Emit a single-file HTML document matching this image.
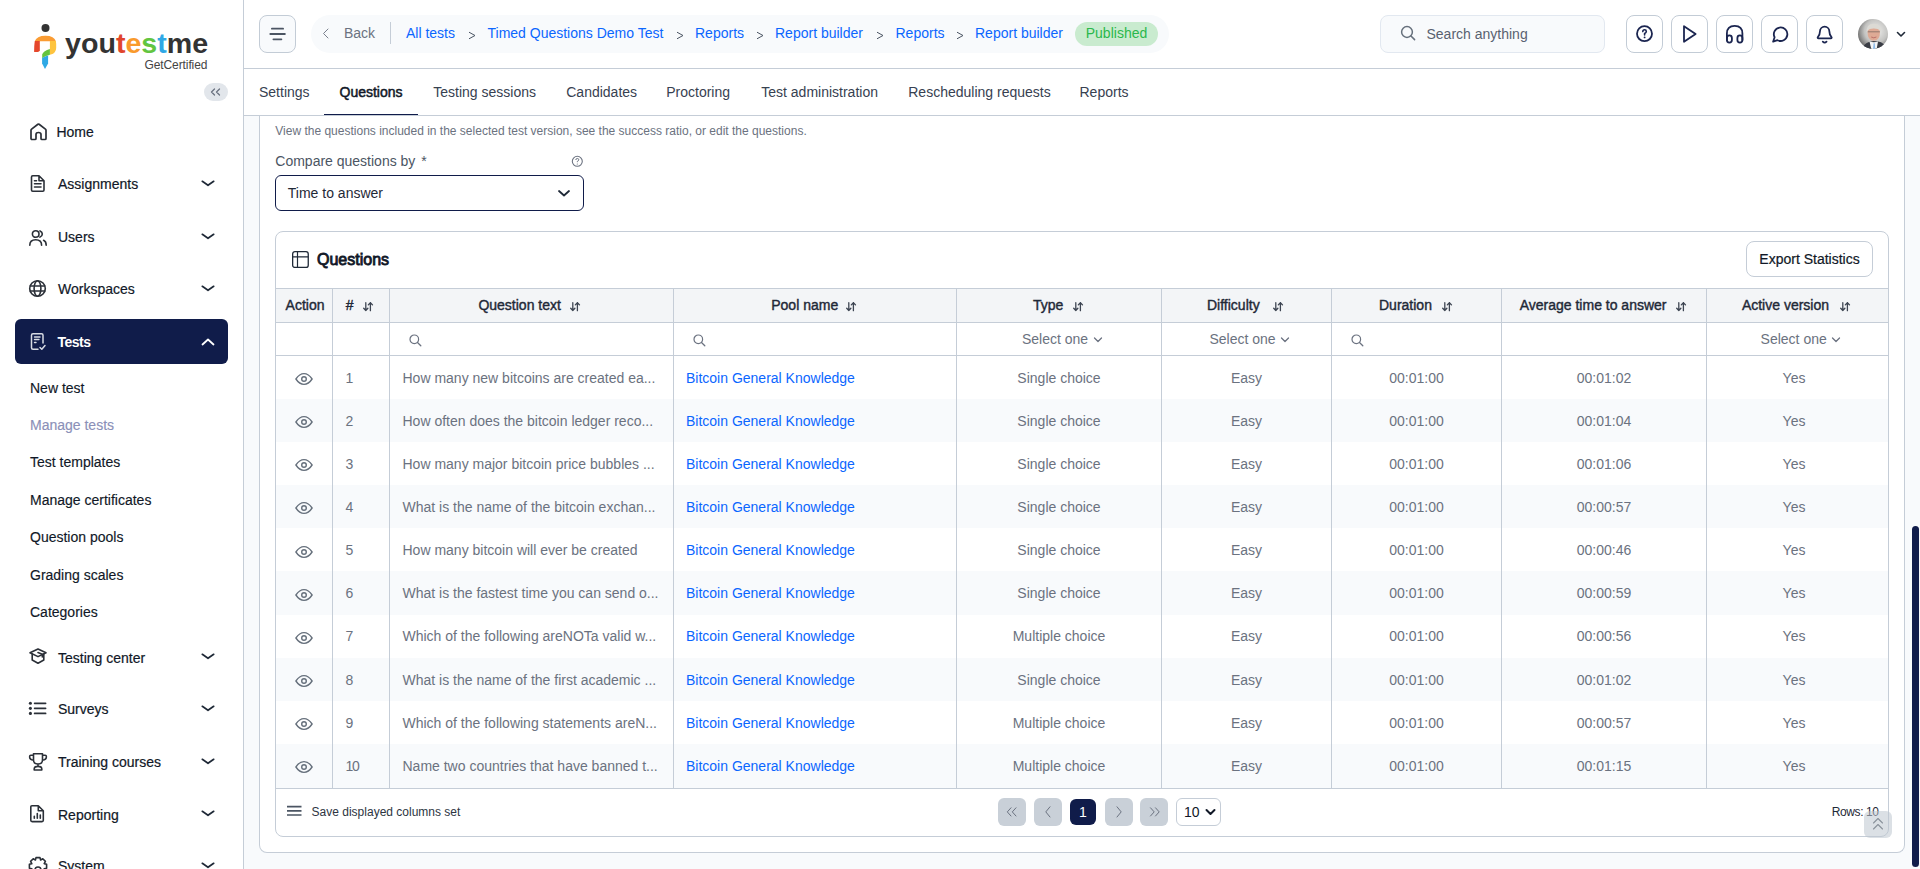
<!DOCTYPE html>
<html><head><meta charset="utf-8">
<style>
*{box-sizing:border-box;margin:0;padding:0}
html,body{width:1920px;height:869px;overflow:hidden;background:#fff;font-family:"Liberation Sans",sans-serif;color:#1f2937}
.a{position:absolute;white-space:nowrap}
.t14{font-size:14px;line-height:16px}
.t12{font-size:12px;line-height:14px}
svg{position:absolute;overflow:visible}
#side{position:absolute;left:0;top:0;width:243px;height:869px;background:#fff}
#sideb{position:absolute;left:243px;top:0;width:1px;height:869px;background:#c5cdd7}
#hdrb{position:absolute;left:244px;top:68px;width:1676px;height:1px;background:#c5cdd7}
#tabb{position:absolute;left:244px;top:115px;width:1676px;height:1px;background:#c5cdd7}
#content{position:absolute;left:244px;top:116px;width:1676px;height:753px;background:#f8fafc}
.sitem{color:#1f2937}
.chev{stroke:#1f2937;stroke-width:1.8;fill:none;stroke-linecap:round;stroke-linejoin:round}
.ico{stroke:#2b3038;stroke-width:1.6;fill:none;stroke-linecap:round;stroke-linejoin:round}
.bc{color:#0b66ff}
.gt{color:#8a9099}
.tab{color:#374151}
.ibtn{position:absolute;top:15px;width:37px;height:38px;border:1px solid #c5cdd7;border-radius:8px;background:#fff}
.hico{stroke:#1b2550;stroke-width:1.8;fill:none;stroke-linecap:round;stroke-linejoin:round}
.th{font-size:14px;line-height:16px;font-weight:700;letter-spacing:-0.5px;color:#1f2937}
.td{font-size:14px;line-height:16px;color:#6b7280}
.lnk{font-size:14px;line-height:16px;color:#0b66ff}
.vl{position:absolute;width:1px;background:#c5cdd7}
.hl{position:absolute;height:1px;background:#c5cdd7}
.pg{position:absolute;top:798px;width:28px;height:28px;border-radius:6px;background:#c8cfd8}
</style></head><body>

<svg style="left:0;top:0" width="243" height="80" viewBox="0 0 243 80">
<circle cx="45.5" cy="28" r="4" fill="#333"/>
<path d="M34.8 41.3 Q36.5 35.7 45.5 35.7 Q54.3 35.7 55.9 41.3 L49.9 41.3 L39.8 41.3 Z" fill="#fa9c33"/>
<path d="M34.8 41 L39.8 41 L39.8 50.3 Q39.6 52 37.6 52 L34.1 52 Q34 46 34.8 41 Z" fill="#e5472b"/>
<path d="M49.9 41 L55.9 41 Q56.4 44 56.2 48 Q56 53.3 50.8 54.5 L49.9 54.7 Z" fill="#fec43f"/>
<path d="M49.9 49 L49.9 54.7 Q45 56 42.2 58.3 L42.2 54.2 Q43.5 51 49.9 49 Z" fill="#64c43e"/>
<path d="M42.1 58 Q45 56.2 48.1 55.6 L48.1 63.5 L45 69 L42.1 63.5 Z" fill="#2fa9e5"/>
</svg>
<div class="a" style="left:65px;top:29px;font-size:27px;line-height:31px;font-weight:700;letter-spacing:0;transform:scaleX(1.06);transform-origin:0 0;color:#333"><span>you</span><span style="color:#e0452c">t</span><span style="color:#f99a2c">e</span><span style="color:#62c540">s</span><span style="color:#2fa8e6">t</span><span>me</span></div>
<div class="a" style="left:144.5px;top:57.53px;font-size:12px;line-height:14px;color:#444;letter-spacing:-0.1px">GetCertified</div>
<div class="a" style="left:204px;top:83px;width:24px;height:18px;border-radius:9px;background:#e2e6eb"></div>
<svg style="left:204px;top:83px" width="24" height="18"><path d="M10.5 6 L7.5 9 L10.5 12 M15.5 6 L12.5 9 L15.5 12" stroke="#6b7280" stroke-width="1.3" fill="none" stroke-linecap="round" stroke-linejoin="round"/></svg>
<svg style="left:30px;top:123px" width="18" height="18"><path d="M1 15.5 L1 7.3 Q1 6.6 1.6 6.1 L7.9 1.3 Q8.5 0.9 9.1 1.3 L15.4 6.1 Q16 6.6 16 7.3 L16 15.5 Q16 16.5 15 16.5 L12 16.5 Q11 16.5 11 15.5 L11 11.5 Q11 9.5 8.5 9.5 Q6 9.5 6 11.5 L6 15.5 Q6 16.5 5 16.5 L2 16.5 Q1 16.5 1 15.5 Z" class="ico" style="stroke-width:1.7"/></svg>
<div class="a" style="left:56.4px;top:124.37px;font-size:14px;line-height:16px;color:#111827;-webkit-text-stroke:0.2px #111827">Home</div>
<svg style="left:30px;top:175px" width="18" height="18"><path d="M1.5 2 Q1.5 0.8 2.7 0.8 L9 0.8 L14 5.8 L14 15 Q14 16.2 12.8 16.2 L2.7 16.2 Q1.5 16.2 1.5 15 Z M9 0.8 L9 5.8 L14 5.8" class="ico"/><path d="M4.5 5.8 L6.5 5.8 M4.5 8.8 L11 8.8 M4.5 12 L11 12" class="ico"/></svg>
<div class="a" style="left:58px;top:176.37px;font-size:14px;line-height:16px;color:#111827;-webkit-text-stroke:0.2px #111827">Assignments</div>
<svg style="left:201px;top:179px" width="14" height="8"><path d="M1.3 2.3 L7 6.3 L12.7 2.3" class="chev" style="stroke-width:1.7"/></svg>
<svg style="left:29px;top:228.5px" width="18" height="18"><circle cx="6.7" cy="5" r="3.3" class="ico"/><path d="M0.8 16.2 Q0.8 10.8 6.7 10.8 Q12.6 10.8 12.6 16.2" class="ico"/><path d="M11 1.9 Q13.3 2.9 13.3 5 Q13.3 7.1 11 8.1 M14.6 11.3 Q17.2 12.5 17.2 16.2" class="ico"/></svg>
<div class="a" style="left:58px;top:229.37px;font-size:14px;line-height:16px;color:#111827;-webkit-text-stroke:0.2px #111827">Users</div>
<svg style="left:201px;top:232px" width="14" height="8"><path d="M1.3 2.3 L7 6.3 L12.7 2.3" class="chev" style="stroke-width:1.7"/></svg>
<svg style="left:29px;top:280px" width="18" height="18"><circle cx="8.5" cy="8.5" r="7.8" class="ico"/><path d="M1.2 6 L15.8 6 M1.2 11 L15.8 11" class="ico"/><ellipse cx="8.5" cy="8.5" rx="3.4" ry="7.8" class="ico"/></svg>
<div class="a" style="left:58px;top:281.37px;font-size:14px;line-height:16px;color:#111827;-webkit-text-stroke:0.2px #111827">Workspaces</div>
<svg style="left:201px;top:284px" width="14" height="8"><path d="M1.3 2.3 L7 6.3 L12.7 2.3" class="chev" style="stroke-width:1.7"/></svg>
<div class="a" style="left:15px;top:319px;width:213px;height:45px;border-radius:6px;background:#101c4a"></div>
<svg style="left:30px;top:333px" width="18" height="18"><path d="M8 16.2 L3 16.2 Q1.5 16.2 1.5 14.7 L1.5 2.3 Q1.5 0.8 3 0.8 L11.5 0.8 Q13 0.8 13 2.3 L13 10" stroke="#d7dbe3" stroke-width="1.5" fill="none" stroke-linecap="round"/><path d="M4.5 4 L10 4 M4.5 6.5 L9 6.5 M4.5 9.5 L6 9.5" stroke="#d7dbe3" stroke-width="1.4" fill="none" stroke-linecap="round"/><path d="M10 14.5 L11.8 16.2 L15 12.5" stroke="#d7dbe3" stroke-width="1.5" fill="none" stroke-linecap="round" stroke-linejoin="round"/></svg>
<div class="a" style="left:57.5px;top:334.37px;font-size:14px;line-height:16px;color:#fff;font-weight:700;letter-spacing:-0.5px">Tests</div>
<svg style="left:201px;top:338px" width="14" height="8"><path d="M1.5 6.5 L7 1.5 L12.5 6.5" stroke="#fff" stroke-width="1.8" fill="none" stroke-linecap="round" stroke-linejoin="round"/></svg>
<div class="a" style="left:30px;top:379.57px;font-size:14px;line-height:16px;color:#111827;-webkit-text-stroke:0.15px #111827">New test</div>
<div class="a" style="left:30px;top:416.57px;font-size:14px;line-height:16px;color:#8b90b8;-webkit-text-stroke:0.15px #8b90b8">Manage tests</div>
<div class="a" style="left:30px;top:454.37px;font-size:14px;line-height:16px;color:#111827;-webkit-text-stroke:0.15px #111827">Test templates</div>
<div class="a" style="left:30px;top:491.77px;font-size:14px;line-height:16px;color:#111827;-webkit-text-stroke:0.15px #111827">Manage certificates</div>
<div class="a" style="left:30px;top:529.37px;font-size:14px;line-height:16px;color:#111827;-webkit-text-stroke:0.15px #111827">Question pools</div>
<div class="a" style="left:30px;top:566.77px;font-size:14px;line-height:16px;color:#111827;-webkit-text-stroke:0.15px #111827">Grading scales</div>
<div class="a" style="left:30px;top:604.37px;font-size:14px;line-height:16px;color:#111827;-webkit-text-stroke:0.15px #111827">Categories</div>
<svg style="left:28px;top:647.4px" width="20" height="20"><path d="M10 2 L18 5.8 L10 9.6 L2 5.8 Z" class="ico"/><path d="M4.2 7 L4.2 13 L10 16.2 L15.8 13 L15.8 7" class="ico"/><path d="M10 5.6 L14.3 7.3 L14.3 10" class="ico"/></svg>
<div class="a" style="left:58px;top:649.77px;font-size:14px;line-height:16px;color:#111827;-webkit-text-stroke:0.2px #111827">Testing center</div>
<svg style="left:201px;top:652.4px" width="14" height="8"><path d="M1.3 2.3 L7 6.3 L12.7 2.3" class="chev" style="stroke-width:1.7"/></svg>
<svg style="left:28px;top:699px" width="20" height="20"><circle cx="2.4" cy="4.3" r="1.55" fill="#2b3038"/><circle cx="2.4" cy="9.35" r="1.55" fill="#2b3038"/><circle cx="2.4" cy="14.4" r="1.55" fill="#2b3038"/><path d="M6.6 4.3 L17.6 4.3 M6.6 9.35 L17.6 9.35 M6.6 14.4 L17.6 14.4" class="ico" style="stroke-width:1.7"/></svg>
<div class="a" style="left:58px;top:701.37px;font-size:14px;line-height:16px;color:#111827;-webkit-text-stroke:0.2px #111827">Surveys</div>
<svg style="left:201px;top:704px" width="14" height="8"><path d="M1.3 2.3 L7 6.3 L12.7 2.3" class="chev" style="stroke-width:1.7"/></svg>
<svg style="left:28px;top:752px" width="20" height="20"><path d="M5.5 1.8 L14.5 1.8 L14.5 8 Q14.5 12 10 12 Q5.5 12 5.5 8 Z M5.5 3.3 L2.8 3.3 Q1.6 3.3 1.6 4.8 Q1.6 7.8 5.6 8.3 M14.5 3.3 L17.2 3.3 Q18.4 3.3 18.4 4.8 Q18.4 7.8 14.4 8.3 M10 12 L10 14.2 M6.2 18 L6.2 17 Q6.2 14.4 10 14.4 Q13.8 14.4 13.8 17 L13.8 18 Z" class="ico"/></svg>
<div class="a" style="left:58px;top:754.37px;font-size:14px;line-height:16px;color:#111827;-webkit-text-stroke:0.2px #111827">Training courses</div>
<svg style="left:201px;top:757px" width="14" height="8"><path d="M1.3 2.3 L7 6.3 L12.7 2.3" class="chev" style="stroke-width:1.7"/></svg>
<svg style="left:28px;top:804.2px" width="20" height="20"><path d="M2.8 2.8 Q2.8 1.7 3.9 1.7 L10.3 1.7 L15.3 6.7 L15.3 16.3 Q15.3 17.6 14 17.6 L4.1 17.6 Q2.8 17.6 2.8 16.3 Z M10.3 1.7 L10.3 6.7 L15.3 6.7" class="ico"/><path d="M6.3 14.3 L6.3 12.3 M9.3 14.3 L9.3 9.5 M12.3 14.3 L12.3 11" class="ico"/></svg>
<div class="a" style="left:58px;top:806.57px;font-size:14px;line-height:16px;color:#111827;-webkit-text-stroke:0.2px #111827">Reporting</div>
<svg style="left:201px;top:809.2px" width="14" height="8"><path d="M1.3 2.3 L7 6.3 L12.7 2.3" class="chev" style="stroke-width:1.7"/></svg>
<svg style="left:28px;top:856px" width="20" height="20"><path d="M8 1.6 L12 1.6 L12.6 4 L14.8 2.8 L17.4 5.4 L16.2 7.6 L18.6 8.2 L18.6 12.2 L16.2 12.8 L17.4 15 L14.8 17.6 L12.6 16.4 L12 18.8 L8 18.8 L7.4 16.4 L5.2 17.6 L2.6 15 L3.8 12.8 L1.4 12.2 L1.4 8.2 L3.8 7.6 L2.6 5.4 L5.2 2.8 L7.4 4 Z" class="ico"/><path d="M7 18 L7 14 Q7 11 10 11 Q13 11 13 14 L13 18" class="ico"/></svg>
<div class="a" style="left:58px;top:858.37px;font-size:14px;line-height:16px;color:#111827;-webkit-text-stroke:0.2px #111827">System</div>
<svg style="left:201px;top:861px" width="14" height="8"><path d="M1.3 2.3 L7 6.3 L12.7 2.3" class="chev" style="stroke-width:1.7"/></svg>
<div class="a" style="left:243px;top:0;width:1px;height:869px;background:#c5cdd7"></div>
<div class="a" style="left:244px;top:68px;width:1676px;height:1px;background:#c5cdd7"></div>
<div class="a" style="left:244px;top:115px;width:1676px;height:1px;background:#c5cdd7"></div>
<div class="a" style="left:244px;top:116px;width:1676px;height:753px;background:#f8fafc"></div>
<div class="a" style="left:259px;top:15px;width:37px;height:38px;border:1px solid #c3ccd6;border-radius:8px;background:#f8fafc"></div>
<svg style="left:259px;top:15px" width="37" height="38"><path d="M12.9 13.65 L24.1 13.65 M11.3 19 L25.9 19 M14.4 24.3 L22.4 24.3" stroke="#4b5563" stroke-width="1.8" stroke-linecap="round"/></svg>
<div class="a" style="left:311px;top:15px;width:858px;height:38px;border-radius:19px;background:#f8fafc"></div>
<svg style="left:320px;top:26px" width="12" height="16"><path d="M8 3 L3.5 7.5 L8 12" stroke="#6b7280" stroke-width="0.9" fill="none" stroke-linecap="round" stroke-linejoin="round"/></svg>
<div class="a" style="left:344px;top:25.37px;font-size:14px;line-height:16px;color:#6b7280">Back</div>
<div class="a" style="left:390px;top:22px;width:1px;height:22px;background:#c5cdd7"></div>
<div class="a" style="left:406px;top:25.37px;font-size:14px;line-height:16px;color:#0b66ff">All tests</div>
<div class="a" style="left:487.5px;top:25.37px;font-size:14px;line-height:16px;color:#0b66ff">Timed Questions Demo Test</div>
<div class="a" style="left:695px;top:25.37px;font-size:14px;line-height:16px;color:#0b66ff">Reports</div>
<div class="a" style="left:775px;top:25.37px;font-size:14px;line-height:16px;color:#0b66ff">Report builder</div>
<div class="a" style="left:895.5px;top:25.37px;font-size:14px;line-height:16px;color:#0b66ff">Reports</div>
<div class="a" style="left:975px;top:25.37px;font-size:14px;line-height:16px;color:#0b66ff">Report builder</div>
<svg style="left:468px;top:30px" width="9" height="10"><path d="M1 2.2 L7 5.5 L1 8.8" stroke="#4b5563" stroke-width="1" fill="none"/></svg>
<svg style="left:676px;top:30px" width="9" height="10"><path d="M1 2.2 L7 5.5 L1 8.8" stroke="#4b5563" stroke-width="1" fill="none"/></svg>
<svg style="left:756px;top:30px" width="9" height="10"><path d="M1 2.2 L7 5.5 L1 8.8" stroke="#4b5563" stroke-width="1" fill="none"/></svg>
<svg style="left:876px;top:30px" width="9" height="10"><path d="M1 2.2 L7 5.5 L1 8.8" stroke="#4b5563" stroke-width="1" fill="none"/></svg>
<svg style="left:956px;top:30px" width="9" height="10"><path d="M1 2.2 L7 5.5 L1 8.8" stroke="#4b5563" stroke-width="1" fill="none"/></svg>
<div class="a" style="left:1075px;top:22px;width:83px;height:24px;border-radius:12px;background:#c9ebcf"></div>
<div class="a" style="left:966.5px;width:300px;text-align:center;top:25.37px;font-size:14px;line-height:16px;color:#2bb84c">Published</div>
<div class="a" style="left:1380px;top:15px;width:225px;height:38px;border:1px solid #e2e8f0;border-radius:8px;background:#f8fafc"></div>
<svg style="left:1400px;top:25.3px" width="17" height="17"><circle cx="7" cy="7" r="5.4" stroke="#66707c" stroke-width="1.5" fill="none"/><path d="M11 11 L14.6 14.6" stroke="#66707c" stroke-width="1.5" stroke-linecap="round"/></svg>
<div class="a" style="left:1426.5px;top:26.37px;font-size:14px;line-height:16px;color:#586170">Search anything</div>
<div class="a" style="left:1626px;top:15px;width:37px;height:38px;border:1px solid #c3ccd6;border-radius:8px;background:#fff"></div>
<div class="a" style="left:1671px;top:15px;width:37px;height:38px;border:1px solid #c3ccd6;border-radius:8px;background:#fff"></div>
<div class="a" style="left:1716px;top:15px;width:37px;height:38px;border:1px solid #c3ccd6;border-radius:8px;background:#fff"></div>
<div class="a" style="left:1761px;top:15px;width:37px;height:38px;border:1px solid #c3ccd6;border-radius:8px;background:#fff"></div>
<div class="a" style="left:1806px;top:15px;width:37px;height:38px;border:1px solid #c3ccd6;border-radius:8px;background:#fff"></div>
<svg style="left:1626px;top:15px" width="37" height="38"><circle cx="18.5" cy="18.7" r="7.5" class="hico"/><path d="M16.8 16.6 Q16.8 14.8 18.6 14.8 Q20.3 14.8 20.3 16.4 Q20.3 17.6 18.6 18.5 L18.6 19.9" class="hico" style="stroke-width:1.6"/><circle cx="18.6" cy="22.4" r="0.95" fill="#1b2550"/></svg>
<svg style="left:1671px;top:15px" width="37" height="38"><path d="M13 11.2 L24.6 19 L13 26.8 Z" class="hico"/></svg>
<svg style="left:1716px;top:15px" width="37" height="38"><path d="M10.9 25 L10.9 18.6 Q10.9 10.9 18.7 10.9 Q26.4 10.9 26.4 18.6 L26.4 25" class="hico"/><rect x="10.9" y="20.4" width="5" height="7.2" rx="2.5" class="hico"/><rect x="21.4" y="20.4" width="5" height="7.2" rx="2.5" class="hico"/></svg>
<svg style="left:1761px;top:15px" width="37" height="38"><g transform="translate(10.6 10.2) scale(0.75)"><path d="M7.9 20A9 9 0 1 0 4 16.1L2 22Z" fill="none" stroke="#1b2550" stroke-width="2.4" stroke-linejoin="round" stroke-linecap="round"/></g></svg>
<svg style="left:1806px;top:15px" width="37" height="38"><g transform="translate(9.3 10.1) scale(0.78)"><path d="M9.6 21.2 Q12 23.6 14.4 21.2" fill="none" stroke="#1b2550" stroke-width="2.3" stroke-linecap="round"/><path d="M3.262 15.326A1 1 0 0 0 4 17h16a1 1 0 0 0 .74-1.673C19.41 13.956 18 12.499 18 8A6 6 0 0 0 6 8c0 4.499-1.411 5.956-2.738 7.326" fill="none" stroke="#1b2550" stroke-width="2.3" stroke-linejoin="round" stroke-linecap="round"/></g></svg>
<svg style="left:1858px;top:19px" width="30" height="30" viewBox="0 0 30 30">
<defs><clipPath id="av"><circle cx="15" cy="15" r="15"/></clipPath>
<radialGradient id="avbg" cx="60%" cy="40%" r="70%"><stop offset="0" stop-color="#f0f0ee"/><stop offset="0.55" stop-color="#c4c4c2"/><stop offset="1" stop-color="#5a5a5a"/></radialGradient></defs>
<g clip-path="url(#av)">
<rect width="30" height="30" fill="url(#avbg)"/>
<path d="M4 31 Q5.5 24.5 11 23 L15.5 22 L20 22.5 Q26.5 23.5 29 30 L30 31 Z" fill="#3a3d45"/>
<path d="M11.5 22.5 L13.5 31 L18.5 31 L20 22.5 Q16 24 11.5 22.5 Z" fill="#f2f4f6"/>
<path d="M15.6 24.2 L14.9 31 L17.3 31 L16.8 24.2 Z" fill="#8fbbe8"/>
<path d="M9.5 13 Q9.5 21.5 15.8 21.8 Q22 21.5 22 13 Q22 9 15.8 9 Q9.5 9 9.5 13 Z" fill="#deaa95"/>
<path d="M8.6 13.5 Q8 5 15.8 4.8 Q23.5 5 23 13.5 Q21.8 9.2 15.8 9.4 Q9.8 9.2 8.6 13.5 Z" fill="#dcdad4"/>
<path d="M9.8 12.8 L21.8 12.8" stroke="#7d6a62" stroke-width="0.8"/>
<path d="M13.2 18 Q15.8 19.6 18.4 18" stroke="#b86a62" stroke-width="0.9" fill="none"/>
</g></svg>
<svg style="left:1895.5px;top:31px" width="10" height="8"><path d="M1.5 1.5 L5 5 L8.5 1.5" stroke="#1f2937" stroke-width="1.6" fill="none" stroke-linecap="round" stroke-linejoin="round"/></svg>
<div class="a" style="left:259px;top:84.47px;font-size:14px;line-height:16px;color:#374151">Settings</div>
<div class="a" style="left:339.5px;top:84.47px;font-size:14px;line-height:16px;color:#111827;-webkit-text-stroke:0.5px #111827">Questions</div>
<div class="a" style="left:433.25px;top:84.47px;font-size:14px;line-height:16px;color:#374151">Testing sessions</div>
<div class="a" style="left:566.25px;top:84.47px;font-size:14px;line-height:16px;color:#374151">Candidates</div>
<div class="a" style="left:666.25px;top:84.47px;font-size:14px;line-height:16px;color:#374151">Proctoring</div>
<div class="a" style="left:761.25px;top:84.47px;font-size:14px;line-height:16px;color:#374151">Test administration</div>
<div class="a" style="left:908.25px;top:84.47px;font-size:14px;line-height:16px;color:#374151">Rescheduling requests</div>
<div class="a" style="left:1079.5px;top:84.47px;font-size:14px;line-height:16px;color:#374151">Reports</div>
<div class="a" style="left:324px;top:113.5px;width:94px;height:1.5px;background:#101c4a"></div>
<div class="a" style="left:259px;top:-100px;width:646px;height:0"></div>
<div class="a" style="left:259px;top:116px;width:1646px;height:737px;border:1px solid #c5cdd7;border-top:none;border-radius:0 0 8px 8px;background:#fff"></div>
<div class="a" style="left:275.3px;top:124.33px;font-size:12px;line-height:14px;color:#6b7280">View the questions included in the selected test version, see the success ratio, or edit the questions.</div>
<div class="a" style="left:275.3px;top:153.27px;font-size:14px;line-height:16px;color:#4b5563">Compare questions by<span style="margin-left:2px"> *</span></div>
<svg style="left:571px;top:155px" width="13" height="13"><circle cx="6.3" cy="6.3" r="5" stroke="#6b7280" stroke-width="1.1" fill="none"/><path d="M4.8 5 Q4.8 3.5 6.3 3.5 Q7.8 3.5 7.8 4.8 Q7.8 5.8 6.3 6.4 L6.3 7.2" stroke="#6b7280" stroke-width="1" fill="none"/><circle cx="6.3" cy="9" r="0.6" fill="#6b7280"/></svg>
<div class="a" style="left:275px;top:175px;width:309px;height:36px;border:1.5px solid #101c4a;border-radius:6px;background:#fff"></div>
<div class="a" style="left:287.8px;top:185.27px;font-size:14px;line-height:16px;color:#1f2937">Time to answer</div>
<svg style="left:557px;top:188.5px" width="14" height="9"><path d="M2 2 L7 6.5 L12 2" stroke="#1f2937" stroke-width="1.8" fill="none" stroke-linecap="round" stroke-linejoin="round"/></svg>
<div class="a" style="left:275px;top:230.5px;width:1614px;height:606px;border:1px solid #c5cdd7;border-radius:8px;background:#fff"></div>
<svg style="left:292px;top:251px" width="18" height="18"><rect x="0.65" y="0.65" width="15.6" height="15.8" rx="2.3" stroke="#1f2937" stroke-width="1.3" fill="none"/><path d="M0.65 5.8 L16.25 5.8 M5.5 0.65 L5.5 16.45" stroke="#1f2937" stroke-width="1.2"/></svg>
<div class="a" style="left:317px;top:250.71px;font-size:16px;line-height:18px;color:#111827;-webkit-text-stroke:0.85px #111827">Questions</div>
<div class="a" style="left:1746px;top:241px;width:127px;height:36px;border:1px solid #c5cdd7;border-radius:8px;background:#fff"></div>
<div class="a" style="left:1659.5px;width:300px;text-align:center;top:251.37px;font-size:14px;line-height:16px;color:#111827;-webkit-text-stroke:0.2px #111827">Export Statistics</div>
<div class="a" style="left:276px;top:288.5px;width:1612px;height:34.0px;background:#f3f5f7"></div>
<div class="a" style="left:276px;top:398.8px;width:1612px;height:43.15px;background:#f8fafc"></div>
<div class="a" style="left:276px;top:485.1px;width:1612px;height:43.15px;background:#f8fafc"></div>
<div class="a" style="left:276px;top:571.4px;width:1612px;height:43.15px;background:#f8fafc"></div>
<div class="a" style="left:276px;top:657.7px;width:1612px;height:43.15px;background:#f8fafc"></div>
<div class="a" style="left:276px;top:744.0px;width:1612px;height:44.35px;background:#f8fafc"></div>
<div class="hl" style="left:276px;top:288.0px;width:1612px"></div>
<div class="hl" style="left:276px;top:322.0px;width:1612px"></div>
<div class="hl" style="left:276px;top:355.1px;width:1612px"></div>
<div class="hl" style="left:276px;top:787.8px;width:1612px"></div>
<div class="vl" style="left:332.0px;top:288.5px;height:499.8px"></div>
<div class="vl" style="left:389.0px;top:288.5px;height:499.8px"></div>
<div class="vl" style="left:673.0px;top:288.5px;height:499.8px"></div>
<div class="vl" style="left:956.0px;top:288.5px;height:499.8px"></div>
<div class="vl" style="left:1161.0px;top:288.5px;height:499.8px"></div>
<div class="vl" style="left:1331.0px;top:288.5px;height:499.8px"></div>
<div class="vl" style="left:1501.0px;top:288.5px;height:499.8px"></div>
<div class="vl" style="left:1706.0px;top:288.5px;height:499.8px"></div>
<div class="a" style="left:285.6px;top:296.97px;font-size:14px;line-height:16px;color:#1f2937;-webkit-text-stroke:0.4px #1f2937">Action</div>
<div class="a" style="left:345.8px;top:296.97px;font-size:14px;line-height:16px;color:#1f2937;-webkit-text-stroke:0.4px #1f2937">#</div>
<svg style="left:362.5px;top:301.5px" width="11" height="10"><path d="M2.8 0.7 L2.8 8.5 M0.7 6.3 L2.8 8.5 L4.9 6.3 M7.4 8.7 L7.4 0.7 M5.3 2.9 L7.4 0.7 L9.5 2.9" stroke="#3d4552" stroke-width="1.3" fill="none" stroke-linecap="round" stroke-linejoin="round"/></svg>
<div class="a" style="left:478.4px;top:296.97px;font-size:14px;line-height:16px;color:#1f2937;-webkit-text-stroke:0.4px #1f2937">Question text</div>
<svg style="left:570px;top:301.5px" width="11" height="10"><path d="M2.8 0.7 L2.8 8.5 M0.7 6.3 L2.8 8.5 L4.9 6.3 M7.4 8.7 L7.4 0.7 M5.3 2.9 L7.4 0.7 L9.5 2.9" stroke="#3d4552" stroke-width="1.3" fill="none" stroke-linecap="round" stroke-linejoin="round"/></svg>
<div class="a" style="left:771.25px;top:296.97px;font-size:14px;line-height:16px;color:#1f2937;-webkit-text-stroke:0.4px #1f2937">Pool name</div>
<svg style="left:846px;top:301.5px" width="11" height="10"><path d="M2.8 0.7 L2.8 8.5 M0.7 6.3 L2.8 8.5 L4.9 6.3 M7.4 8.7 L7.4 0.7 M5.3 2.9 L7.4 0.7 L9.5 2.9" stroke="#3d4552" stroke-width="1.3" fill="none" stroke-linecap="round" stroke-linejoin="round"/></svg>
<div class="a" style="left:1033px;top:296.97px;font-size:14px;line-height:16px;color:#1f2937;-webkit-text-stroke:0.4px #1f2937">Type</div>
<svg style="left:1072.8px;top:301.5px" width="11" height="10"><path d="M2.8 0.7 L2.8 8.5 M0.7 6.3 L2.8 8.5 L4.9 6.3 M7.4 8.7 L7.4 0.7 M5.3 2.9 L7.4 0.7 L9.5 2.9" stroke="#3d4552" stroke-width="1.3" fill="none" stroke-linecap="round" stroke-linejoin="round"/></svg>
<div class="a" style="left:1207px;top:296.97px;font-size:14px;line-height:16px;color:#1f2937;-webkit-text-stroke:0.4px #1f2937">Difficulty</div>
<svg style="left:1272.5px;top:301.5px" width="11" height="10"><path d="M2.8 0.7 L2.8 8.5 M0.7 6.3 L2.8 8.5 L4.9 6.3 M7.4 8.7 L7.4 0.7 M5.3 2.9 L7.4 0.7 L9.5 2.9" stroke="#3d4552" stroke-width="1.3" fill="none" stroke-linecap="round" stroke-linejoin="round"/></svg>
<div class="a" style="left:1379px;top:296.97px;font-size:14px;line-height:16px;color:#1f2937;-webkit-text-stroke:0.4px #1f2937">Duration</div>
<svg style="left:1441.5px;top:301.5px" width="11" height="10"><path d="M2.8 0.7 L2.8 8.5 M0.7 6.3 L2.8 8.5 L4.9 6.3 M7.4 8.7 L7.4 0.7 M5.3 2.9 L7.4 0.7 L9.5 2.9" stroke="#3d4552" stroke-width="1.3" fill="none" stroke-linecap="round" stroke-linejoin="round"/></svg>
<div class="a" style="left:1519.7px;top:296.97px;font-size:14px;line-height:16px;color:#1f2937;-webkit-text-stroke:0.4px #1f2937">Average time to answer</div>
<svg style="left:1675.7px;top:301.5px" width="11" height="10"><path d="M2.8 0.7 L2.8 8.5 M0.7 6.3 L2.8 8.5 L4.9 6.3 M7.4 8.7 L7.4 0.7 M5.3 2.9 L7.4 0.7 L9.5 2.9" stroke="#3d4552" stroke-width="1.3" fill="none" stroke-linecap="round" stroke-linejoin="round"/></svg>
<div class="a" style="left:1741.9px;top:296.97px;font-size:14px;line-height:16px;color:#1f2937;-webkit-text-stroke:0.4px #1f2937">Active version</div>
<svg style="left:1839.7px;top:301.5px" width="11" height="10"><path d="M2.8 0.7 L2.8 8.5 M0.7 6.3 L2.8 8.5 L4.9 6.3 M7.4 8.7 L7.4 0.7 M5.3 2.9 L7.4 0.7 L9.5 2.9" stroke="#3d4552" stroke-width="1.3" fill="none" stroke-linecap="round" stroke-linejoin="round"/></svg>
<svg style="left:409px;top:334px" width="13" height="13"><circle cx="5.3" cy="5.3" r="4.3" stroke="#6b7280" stroke-width="1.2" fill="none"/><path d="M8.5 8.5 L11.8 11.8" stroke="#6b7280" stroke-width="1.3" stroke-linecap="round"/></svg>
<svg style="left:693px;top:334px" width="13" height="13"><circle cx="5.3" cy="5.3" r="4.3" stroke="#6b7280" stroke-width="1.2" fill="none"/><path d="M8.5 8.5 L11.8 11.8" stroke="#6b7280" stroke-width="1.3" stroke-linecap="round"/></svg>
<svg style="left:1351px;top:334px" width="13" height="13"><circle cx="5.3" cy="5.3" r="4.3" stroke="#6b7280" stroke-width="1.2" fill="none"/><path d="M8.5 8.5 L11.8 11.8" stroke="#6b7280" stroke-width="1.3" stroke-linecap="round"/></svg>
<div class="a" style="left:1021.9px;top:331.37px;font-size:14px;line-height:16px;color:#6b7280">Select one</div>
<svg style="left:1093px;top:335.5px" width="11" height="8"><path d="M1.5 2 L5 5.5 L8.5 2" stroke="#6b7280" stroke-width="1.3" fill="none" stroke-linecap="round" stroke-linejoin="round"/></svg>
<div class="a" style="left:1209.4px;top:331.37px;font-size:14px;line-height:16px;color:#6b7280">Select one</div>
<svg style="left:1280px;top:335.5px" width="11" height="8"><path d="M1.5 2 L5 5.5 L8.5 2" stroke="#6b7280" stroke-width="1.3" fill="none" stroke-linecap="round" stroke-linejoin="round"/></svg>
<div class="a" style="left:1760.6px;top:331.37px;font-size:14px;line-height:16px;color:#6b7280">Select one</div>
<svg style="left:1831px;top:335.5px" width="11" height="8"><path d="M1.5 2 L5 5.5 L8.5 2" stroke="#6b7280" stroke-width="1.3" fill="none" stroke-linecap="round" stroke-linejoin="round"/></svg>
<svg style="left:294.7px;top:371.90000000000003px" width="18" height="14"><path d="M0.9 7 Q4.5 1.6 9 1.6 Q13.5 1.6 17.1 7 Q13.5 12.4 9 12.4 Q4.5 12.4 0.9 7 Z" stroke="#66707c" stroke-width="1.4" fill="none" stroke-linejoin="round"/><circle cx="9" cy="7" r="2.3" stroke="#66707c" stroke-width="1.4" fill="none"/></svg>
<div class="a" style="left:345.4px;top:369.57px;font-size:14px;line-height:16px;color:#6b7280">1</div>
<div class="a" style="left:402.5px;top:369.57px;font-size:14px;line-height:16px;color:#6b7280">How many new bitcoins are created ea...</div>
<div class="a" style="left:686px;top:369.57px;font-size:14px;line-height:16px;color:#0b66ff">Bitcoin General Knowledge</div>
<div class="a" style="left:909.0px;width:300px;text-align:center;top:369.57px;font-size:14px;line-height:16px;color:#6b7280">Single choice</div>
<div class="a" style="left:1096.5px;width:300px;text-align:center;top:369.57px;font-size:14px;line-height:16px;color:#6b7280">Easy</div>
<div class="a" style="left:1266.5px;width:300px;text-align:center;top:369.57px;font-size:14px;line-height:16px;color:#6b7280">00:01:00</div>
<div class="a" style="left:1454.0px;width:300px;text-align:center;top:369.57px;font-size:14px;line-height:16px;color:#6b7280">00:01:02</div>
<div class="a" style="left:1644.0px;width:300px;text-align:center;top:369.57px;font-size:14px;line-height:16px;color:#6b7280">Yes</div>
<svg style="left:294.7px;top:415.05px" width="18" height="14"><path d="M0.9 7 Q4.5 1.6 9 1.6 Q13.5 1.6 17.1 7 Q13.5 12.4 9 12.4 Q4.5 12.4 0.9 7 Z" stroke="#66707c" stroke-width="1.4" fill="none" stroke-linejoin="round"/><circle cx="9" cy="7" r="2.3" stroke="#66707c" stroke-width="1.4" fill="none"/></svg>
<div class="a" style="left:345.4px;top:412.72px;font-size:14px;line-height:16px;color:#6b7280">2</div>
<div class="a" style="left:402.5px;top:412.72px;font-size:14px;line-height:16px;color:#6b7280">How often does the bitcoin ledger reco...</div>
<div class="a" style="left:686px;top:412.72px;font-size:14px;line-height:16px;color:#0b66ff">Bitcoin General Knowledge</div>
<div class="a" style="left:909.0px;width:300px;text-align:center;top:412.72px;font-size:14px;line-height:16px;color:#6b7280">Single choice</div>
<div class="a" style="left:1096.5px;width:300px;text-align:center;top:412.72px;font-size:14px;line-height:16px;color:#6b7280">Easy</div>
<div class="a" style="left:1266.5px;width:300px;text-align:center;top:412.72px;font-size:14px;line-height:16px;color:#6b7280">00:01:00</div>
<div class="a" style="left:1454.0px;width:300px;text-align:center;top:412.72px;font-size:14px;line-height:16px;color:#6b7280">00:01:04</div>
<div class="a" style="left:1644.0px;width:300px;text-align:center;top:412.72px;font-size:14px;line-height:16px;color:#6b7280">Yes</div>
<svg style="left:294.7px;top:458.20000000000005px" width="18" height="14"><path d="M0.9 7 Q4.5 1.6 9 1.6 Q13.5 1.6 17.1 7 Q13.5 12.4 9 12.4 Q4.5 12.4 0.9 7 Z" stroke="#66707c" stroke-width="1.4" fill="none" stroke-linejoin="round"/><circle cx="9" cy="7" r="2.3" stroke="#66707c" stroke-width="1.4" fill="none"/></svg>
<div class="a" style="left:345.4px;top:455.87px;font-size:14px;line-height:16px;color:#6b7280">3</div>
<div class="a" style="left:402.5px;top:455.87px;font-size:14px;line-height:16px;color:#6b7280">How many major bitcoin price bubbles ...</div>
<div class="a" style="left:686px;top:455.87px;font-size:14px;line-height:16px;color:#0b66ff">Bitcoin General Knowledge</div>
<div class="a" style="left:909.0px;width:300px;text-align:center;top:455.87px;font-size:14px;line-height:16px;color:#6b7280">Single choice</div>
<div class="a" style="left:1096.5px;width:300px;text-align:center;top:455.87px;font-size:14px;line-height:16px;color:#6b7280">Easy</div>
<div class="a" style="left:1266.5px;width:300px;text-align:center;top:455.87px;font-size:14px;line-height:16px;color:#6b7280">00:01:00</div>
<div class="a" style="left:1454.0px;width:300px;text-align:center;top:455.87px;font-size:14px;line-height:16px;color:#6b7280">00:01:06</div>
<div class="a" style="left:1644.0px;width:300px;text-align:center;top:455.87px;font-size:14px;line-height:16px;color:#6b7280">Yes</div>
<svg style="left:294.7px;top:501.35px" width="18" height="14"><path d="M0.9 7 Q4.5 1.6 9 1.6 Q13.5 1.6 17.1 7 Q13.5 12.4 9 12.4 Q4.5 12.4 0.9 7 Z" stroke="#66707c" stroke-width="1.4" fill="none" stroke-linejoin="round"/><circle cx="9" cy="7" r="2.3" stroke="#66707c" stroke-width="1.4" fill="none"/></svg>
<div class="a" style="left:345.4px;top:499.02px;font-size:14px;line-height:16px;color:#6b7280">4</div>
<div class="a" style="left:402.5px;top:499.02px;font-size:14px;line-height:16px;color:#6b7280">What is the name of the bitcoin exchan...</div>
<div class="a" style="left:686px;top:499.02px;font-size:14px;line-height:16px;color:#0b66ff">Bitcoin General Knowledge</div>
<div class="a" style="left:909.0px;width:300px;text-align:center;top:499.02px;font-size:14px;line-height:16px;color:#6b7280">Single choice</div>
<div class="a" style="left:1096.5px;width:300px;text-align:center;top:499.02px;font-size:14px;line-height:16px;color:#6b7280">Easy</div>
<div class="a" style="left:1266.5px;width:300px;text-align:center;top:499.02px;font-size:14px;line-height:16px;color:#6b7280">00:01:00</div>
<div class="a" style="left:1454.0px;width:300px;text-align:center;top:499.02px;font-size:14px;line-height:16px;color:#6b7280">00:00:57</div>
<div class="a" style="left:1644.0px;width:300px;text-align:center;top:499.02px;font-size:14px;line-height:16px;color:#6b7280">Yes</div>
<svg style="left:294.7px;top:544.5px" width="18" height="14"><path d="M0.9 7 Q4.5 1.6 9 1.6 Q13.5 1.6 17.1 7 Q13.5 12.4 9 12.4 Q4.5 12.4 0.9 7 Z" stroke="#66707c" stroke-width="1.4" fill="none" stroke-linejoin="round"/><circle cx="9" cy="7" r="2.3" stroke="#66707c" stroke-width="1.4" fill="none"/></svg>
<div class="a" style="left:345.4px;top:542.17px;font-size:14px;line-height:16px;color:#6b7280">5</div>
<div class="a" style="left:402.5px;top:542.17px;font-size:14px;line-height:16px;color:#6b7280">How many bitcoin will ever be created</div>
<div class="a" style="left:686px;top:542.17px;font-size:14px;line-height:16px;color:#0b66ff">Bitcoin General Knowledge</div>
<div class="a" style="left:909.0px;width:300px;text-align:center;top:542.17px;font-size:14px;line-height:16px;color:#6b7280">Single choice</div>
<div class="a" style="left:1096.5px;width:300px;text-align:center;top:542.17px;font-size:14px;line-height:16px;color:#6b7280">Easy</div>
<div class="a" style="left:1266.5px;width:300px;text-align:center;top:542.17px;font-size:14px;line-height:16px;color:#6b7280">00:01:00</div>
<div class="a" style="left:1454.0px;width:300px;text-align:center;top:542.17px;font-size:14px;line-height:16px;color:#6b7280">00:00:46</div>
<div class="a" style="left:1644.0px;width:300px;text-align:center;top:542.17px;font-size:14px;line-height:16px;color:#6b7280">Yes</div>
<svg style="left:294.7px;top:587.65px" width="18" height="14"><path d="M0.9 7 Q4.5 1.6 9 1.6 Q13.5 1.6 17.1 7 Q13.5 12.4 9 12.4 Q4.5 12.4 0.9 7 Z" stroke="#66707c" stroke-width="1.4" fill="none" stroke-linejoin="round"/><circle cx="9" cy="7" r="2.3" stroke="#66707c" stroke-width="1.4" fill="none"/></svg>
<div class="a" style="left:345.4px;top:585.32px;font-size:14px;line-height:16px;color:#6b7280">6</div>
<div class="a" style="left:402.5px;top:585.32px;font-size:14px;line-height:16px;color:#6b7280">What is the fastest time you can send o...</div>
<div class="a" style="left:686px;top:585.32px;font-size:14px;line-height:16px;color:#0b66ff">Bitcoin General Knowledge</div>
<div class="a" style="left:909.0px;width:300px;text-align:center;top:585.32px;font-size:14px;line-height:16px;color:#6b7280">Single choice</div>
<div class="a" style="left:1096.5px;width:300px;text-align:center;top:585.32px;font-size:14px;line-height:16px;color:#6b7280">Easy</div>
<div class="a" style="left:1266.5px;width:300px;text-align:center;top:585.32px;font-size:14px;line-height:16px;color:#6b7280">00:01:00</div>
<div class="a" style="left:1454.0px;width:300px;text-align:center;top:585.32px;font-size:14px;line-height:16px;color:#6b7280">00:00:59</div>
<div class="a" style="left:1644.0px;width:300px;text-align:center;top:585.32px;font-size:14px;line-height:16px;color:#6b7280">Yes</div>
<svg style="left:294.7px;top:630.8px" width="18" height="14"><path d="M0.9 7 Q4.5 1.6 9 1.6 Q13.5 1.6 17.1 7 Q13.5 12.4 9 12.4 Q4.5 12.4 0.9 7 Z" stroke="#66707c" stroke-width="1.4" fill="none" stroke-linejoin="round"/><circle cx="9" cy="7" r="2.3" stroke="#66707c" stroke-width="1.4" fill="none"/></svg>
<div class="a" style="left:345.4px;top:628.47px;font-size:14px;line-height:16px;color:#6b7280">7</div>
<div class="a" style="left:402.5px;top:628.47px;font-size:14px;line-height:16px;color:#6b7280">Which of the following areNOTa valid w...</div>
<div class="a" style="left:686px;top:628.47px;font-size:14px;line-height:16px;color:#0b66ff">Bitcoin General Knowledge</div>
<div class="a" style="left:909.0px;width:300px;text-align:center;top:628.47px;font-size:14px;line-height:16px;color:#6b7280">Multiple choice</div>
<div class="a" style="left:1096.5px;width:300px;text-align:center;top:628.47px;font-size:14px;line-height:16px;color:#6b7280">Easy</div>
<div class="a" style="left:1266.5px;width:300px;text-align:center;top:628.47px;font-size:14px;line-height:16px;color:#6b7280">00:01:00</div>
<div class="a" style="left:1454.0px;width:300px;text-align:center;top:628.47px;font-size:14px;line-height:16px;color:#6b7280">00:00:56</div>
<div class="a" style="left:1644.0px;width:300px;text-align:center;top:628.47px;font-size:14px;line-height:16px;color:#6b7280">Yes</div>
<svg style="left:294.7px;top:673.95px" width="18" height="14"><path d="M0.9 7 Q4.5 1.6 9 1.6 Q13.5 1.6 17.1 7 Q13.5 12.4 9 12.4 Q4.5 12.4 0.9 7 Z" stroke="#66707c" stroke-width="1.4" fill="none" stroke-linejoin="round"/><circle cx="9" cy="7" r="2.3" stroke="#66707c" stroke-width="1.4" fill="none"/></svg>
<div class="a" style="left:345.4px;top:671.62px;font-size:14px;line-height:16px;color:#6b7280">8</div>
<div class="a" style="left:402.5px;top:671.62px;font-size:14px;line-height:16px;color:#6b7280">What is the name of the first academic ...</div>
<div class="a" style="left:686px;top:671.62px;font-size:14px;line-height:16px;color:#0b66ff">Bitcoin General Knowledge</div>
<div class="a" style="left:909.0px;width:300px;text-align:center;top:671.62px;font-size:14px;line-height:16px;color:#6b7280">Single choice</div>
<div class="a" style="left:1096.5px;width:300px;text-align:center;top:671.62px;font-size:14px;line-height:16px;color:#6b7280">Easy</div>
<div class="a" style="left:1266.5px;width:300px;text-align:center;top:671.62px;font-size:14px;line-height:16px;color:#6b7280">00:01:00</div>
<div class="a" style="left:1454.0px;width:300px;text-align:center;top:671.62px;font-size:14px;line-height:16px;color:#6b7280">00:01:02</div>
<div class="a" style="left:1644.0px;width:300px;text-align:center;top:671.62px;font-size:14px;line-height:16px;color:#6b7280">Yes</div>
<svg style="left:294.7px;top:717.0999999999999px" width="18" height="14"><path d="M0.9 7 Q4.5 1.6 9 1.6 Q13.5 1.6 17.1 7 Q13.5 12.4 9 12.4 Q4.5 12.4 0.9 7 Z" stroke="#66707c" stroke-width="1.4" fill="none" stroke-linejoin="round"/><circle cx="9" cy="7" r="2.3" stroke="#66707c" stroke-width="1.4" fill="none"/></svg>
<div class="a" style="left:345.4px;top:714.77px;font-size:14px;line-height:16px;color:#6b7280">9</div>
<div class="a" style="left:402.5px;top:714.77px;font-size:14px;line-height:16px;color:#6b7280">Which of the following statements areN...</div>
<div class="a" style="left:686px;top:714.77px;font-size:14px;line-height:16px;color:#0b66ff">Bitcoin General Knowledge</div>
<div class="a" style="left:909.0px;width:300px;text-align:center;top:714.77px;font-size:14px;line-height:16px;color:#6b7280">Multiple choice</div>
<div class="a" style="left:1096.5px;width:300px;text-align:center;top:714.77px;font-size:14px;line-height:16px;color:#6b7280">Easy</div>
<div class="a" style="left:1266.5px;width:300px;text-align:center;top:714.77px;font-size:14px;line-height:16px;color:#6b7280">00:01:00</div>
<div class="a" style="left:1454.0px;width:300px;text-align:center;top:714.77px;font-size:14px;line-height:16px;color:#6b7280">00:00:57</div>
<div class="a" style="left:1644.0px;width:300px;text-align:center;top:714.77px;font-size:14px;line-height:16px;color:#6b7280">Yes</div>
<svg style="left:294.7px;top:760.25px" width="18" height="14"><path d="M0.9 7 Q4.5 1.6 9 1.6 Q13.5 1.6 17.1 7 Q13.5 12.4 9 12.4 Q4.5 12.4 0.9 7 Z" stroke="#66707c" stroke-width="1.4" fill="none" stroke-linejoin="round"/><circle cx="9" cy="7" r="2.3" stroke="#66707c" stroke-width="1.4" fill="none"/></svg>
<div class="a" style="left:345.4px;top:757.92px;font-size:14px;line-height:16px;color:#6b7280;letter-spacing:-1.3px">10</div>
<div class="a" style="left:402.5px;top:757.92px;font-size:14px;line-height:16px;color:#6b7280">Name two countries that have banned t...</div>
<div class="a" style="left:686px;top:757.92px;font-size:14px;line-height:16px;color:#0b66ff">Bitcoin General Knowledge</div>
<div class="a" style="left:909.0px;width:300px;text-align:center;top:757.92px;font-size:14px;line-height:16px;color:#6b7280">Multiple choice</div>
<div class="a" style="left:1096.5px;width:300px;text-align:center;top:757.92px;font-size:14px;line-height:16px;color:#6b7280">Easy</div>
<div class="a" style="left:1266.5px;width:300px;text-align:center;top:757.92px;font-size:14px;line-height:16px;color:#6b7280">00:01:00</div>
<div class="a" style="left:1454.0px;width:300px;text-align:center;top:757.92px;font-size:14px;line-height:16px;color:#6b7280">00:01:15</div>
<div class="a" style="left:1644.0px;width:300px;text-align:center;top:757.92px;font-size:14px;line-height:16px;color:#6b7280">Yes</div>
<svg style="left:286px;top:804px" width="17" height="14"><path d="M1 2.7 L15.5 2.7 M1 6.8 L15.5 6.8 M1 11 L15.5 11" stroke="#4b5563" stroke-width="1.7"/></svg>
<div class="a" style="left:311.6px;top:804.73px;font-size:12px;line-height:14px;color:#2d3542">Save displayed columns set</div>
<div class="a" style="left:998px;top:798px;width:28px;height:28px;border-radius:6px;background:#c9d0d8"></div>
<div class="a" style="left:1034px;top:798px;width:28px;height:28px;border-radius:6px;background:#c9d0d8"></div>
<div class="a" style="left:1105px;top:798px;width:28px;height:28px;border-radius:6px;background:#c9d0d8"></div>
<div class="a" style="left:1140px;top:798px;width:28px;height:28px;border-radius:6px;background:#c9d0d8"></div>
<div class="a" style="left:1070px;top:799px;width:26px;height:26px;border-radius:6px;background:#101c4a"></div>
<div class="a" style="left:1073.0px;width:20px;text-align:center;top:803.87px;font-size:14px;line-height:16px;color:#fff">1</div>
<svg style="left:998px;top:798px" width="28" height="28"><path d="M13 9.8 L9.3 13.9 L13 18 M18 9.8 L14.3 13.9 L18 18" stroke="#6b7280" stroke-width="1" fill="none" stroke-linecap="round" stroke-linejoin="round"/></svg>
<svg style="left:1034px;top:798px" width="28" height="28"><path d="M16 8.8 L11.8 13.9 L16 19" stroke="#6b7280" stroke-width="1" fill="none" stroke-linecap="round" stroke-linejoin="round"/></svg>
<svg style="left:1105px;top:798px" width="28" height="28"><path d="M12 8.8 L16.2 13.9 L12 19" stroke="#6b7280" stroke-width="1" fill="none" stroke-linecap="round" stroke-linejoin="round"/></svg>
<svg style="left:1140px;top:798px" width="28" height="28"><path d="M10.5 9.8 L14.2 13.9 L10.5 18 M15.5 9.8 L19.2 13.9 L15.5 18" stroke="#6b7280" stroke-width="1" fill="none" stroke-linecap="round" stroke-linejoin="round"/></svg>
<div class="a" style="left:1176px;top:798px;width:45px;height:28px;border:1px solid #c5cdd7;border-radius:6px;background:#fff"></div>
<div class="a" style="left:1184px;top:804.37px;font-size:14px;line-height:16px;color:#111827">10</div>
<svg style="left:1205.4px;top:808.3px" width="12" height="9"><path d="M1.5 2 L5.5 6 L9.5 2" stroke="#111827" stroke-width="2" fill="none" stroke-linecap="round" stroke-linejoin="round"/></svg>
<div class="a" style="left:1831.8px;top:804.63px;font-size:12px;line-height:14px;color:#1f2937;letter-spacing:-0.4px">Rows: 10</div>
<div class="a" style="left:1864px;top:811px;width:28px;height:27px;border-radius:6px;background:rgba(190,198,208,0.55)"></div>
<svg style="left:1864px;top:812px" width="28" height="27"><path d="M9.5 11 L14 6.5 L18.5 11 M9.5 17 L14 12.5 L18.5 17" stroke="#8a929c" stroke-width="1.1" fill="none" stroke-linecap="round" stroke-linejoin="round"/></svg>
<div class="a" style="left:1912px;top:526px;width:7px;height:341px;border-radius:3.5px;background:#101c4a"></div>
</body></html>
